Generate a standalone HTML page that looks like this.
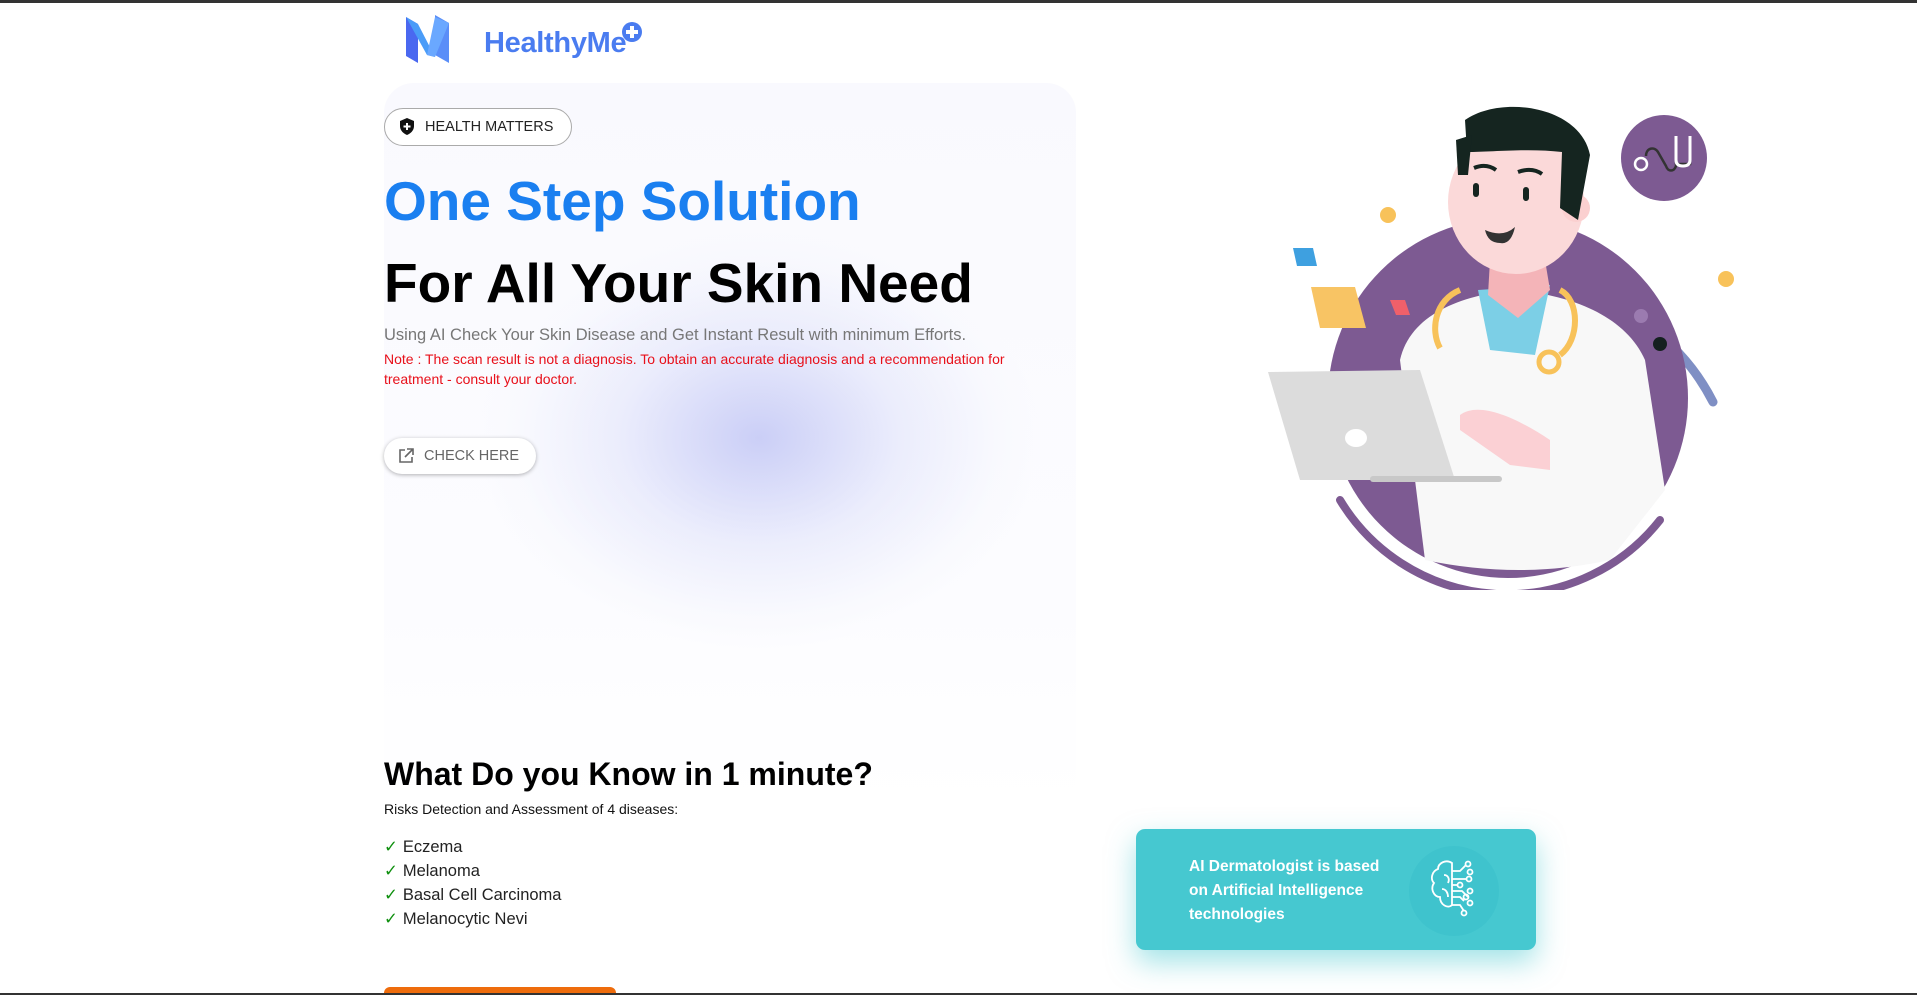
<!DOCTYPE html>
<html><head><meta charset="utf-8"><style>
*{margin:0;padding:0;box-sizing:border-box}
html,body{width:1917px;height:995px;overflow:hidden}
body{background:#fff;font-family:"Liberation Sans",Arial,sans-serif;position:relative}
.topbar{position:absolute;left:0;top:0;width:1917px;height:3px;background:#333}
.botbar{position:absolute;left:0;top:993px;width:1917px;height:2px;background:#333}
.panel{position:absolute;left:384px;top:83px;width:692px;height:723px;border-radius:30px;background:radial-gradient(ellipse 280px 210px at 375px 355px,rgba(200,204,246,.95),rgba(222,225,250,.55) 50%,rgba(246,247,253,.5) 85%,rgba(255,255,255,0) 100%),linear-gradient(#f9f9fe,#fcfcff 70%,#fff)}
.abs{position:absolute}
.logo-t{left:484px;top:27px;font-size:29px;font-weight:bold;color:#4a7cf0;letter-spacing:-0.3px}
.badge{left:384px;top:108px;width:188px;height:38px;border:1px solid #aaa;border-radius:19px;background:#fff;font-size:14.5px;color:#222;line-height:36px;padding-left:40px}
h1{position:absolute;left:384px;font-weight:bold;white-space:nowrap}
.h1a{top:169px;font-size:55px;color:#1a7ff0}
.h1b{top:251px;font-size:55px;color:#000}
.sub{left:384px;top:326px;font-size:16.5px;color:#777}
.note{left:384px;top:349px;font-size:14px;color:#e8101a;line-height:20px;width:660px}
.btn{left:384px;top:438px;width:152px;height:36px;border-radius:18px;background:#fff;box-shadow:0 1px 4px rgba(0,0,0,.3);font-size:14.5px;color:#666;line-height:36px;padding-left:40px}
.h2{left:384px;top:756px;font-size:32px;font-weight:bold;color:#000}
.risk{left:384px;top:801px;font-size:14px;color:#111}
.list{left:384px;top:835px;font-size:16.5px;color:#222;line-height:24px}
.list span{color:#109010;margin-right:5px}
.orange{left:384px;top:987px;width:232px;height:6px;border-radius:10px 10px 0 0;background:#ee6c0c}
.card{left:1136px;top:829px;width:400px;height:121px;border-radius:9px;background:#46c8d0;box-shadow:0 12px 28px rgba(70,200,208,.5)}
.card p{position:absolute;left:53px;top:26px;color:#fff;font-weight:bold;font-size:15.5px;line-height:24px}
</style></head><body>
<div class="topbar"></div>
<div class="panel"></div>
<svg class="abs" style="left:405px;top:15px" width="60" height="50" viewBox="0 0 60 50">
<polygon points="1,2 13,9 13,48 1,41" fill="#4a68f0"/>
<polygon points="1,2 13,9 30,42 22,40" fill="#4a9cf8"/>
<polygon points="30,0 44,8 44,48 30,40" fill="#5a8ef8"/>
<polygon points="22,40 30,42 44,8 30,2" fill="#6aa8ff"/>
</svg>
<div class="abs logo-t">HealthyMe</div>
<svg class="abs" style="left:620px;top:20px" width="24" height="24" viewBox="0 0 24 24"><circle cx="12" cy="12" r="10" fill="#4a7cf0"/><path d="M12 6v12M6 12h12" stroke="#fff" stroke-width="4"/></svg>
<div class="abs badge">HEALTH MATTERS</div>
<svg class="abs" style="left:400px;top:118px" width="14" height="17" viewBox="0 0 14 17"><path d="M7 0L0 3v5c0 4 3 7.5 7 9 4-1.5 7-5 7-9V3z" fill="#111"/><path d="M7 5v7M3.5 8.5h7" stroke="#fff" stroke-width="2"/></svg>
<h1 class="h1a">One Step Solution</h1>
<h1 class="h1b">For All Your Skin Need</h1>
<div class="abs sub">Using AI Check Your Skin Disease and Get Instant Result with minimum Efforts.</div>
<div class="abs note">Note : The scan result is not a diagnosis. To obtain an accurate diagnosis and a recommendation for treatment - consult your doctor.</div>
<div class="abs btn">CHECK HERE</div>
<svg class="abs" style="left:398px;top:448px" width="16" height="16" viewBox="0 0 16 16" fill="none" stroke="#666" stroke-width="1.6"><path d="M7 2H2v12h12V9M9 1h6v6M15 1L7 9"/></svg>
<div class="abs h2">What Do you Know in 1 minute?</div>
<div class="abs risk">Risks Detection and Assessment of 4 diseases:</div>
<div class="abs list"><div><span>✓</span>Eczema</div><div><span>✓</span>Melanoma</div><div><span>✓</span>Basal Cell Carcinoma</div><div><span>✓</span>Melanocytic Nevi</div></div>
<div class="abs orange"></div>
<div class="abs card"><p>AI Dermatologist is based<br>on Artificial Intelligence<br>technologies</p>
<svg style="position:absolute;left:272px;top:16px" width="92" height="92" viewBox="0 0 92 92"><circle cx="46" cy="46" r="45" fill="#3fc3cd"/>
<g fill="none" stroke="#fff" stroke-width="1.8"><path d="M44 18c-6-4-14 0-14 6-6 2-8 10-4 14-4 6 0 14 6 14 0 8 8 12 12 8z"/><path d="M36 30c4 0 6 4 4 8M34 44c4 0 6 4 6 8"/><path d="M44 26h8l6-6M44 34h14M44 40h6M44 46h10l6 6M44 52h8l4 4M44 60h8l4 6"/><circle cx="60" cy="19" r="2.5"/><circle cx="62" cy="27" r="2.5"/><circle cx="61" cy="34" r="2.5"/><circle cx="52" cy="40" r="2.5"/><circle cx="62" cy="46" r="2.5"/><circle cx="58" cy="52" r="2.5"/><circle cx="62" cy="58" r="2.5"/><circle cx="56" cy="68" r="2.5"/></g></svg>
</div>
<svg class="abs" style="left:1260px;top:90px" width="490" height="500" viewBox="0 0 490 500">
<path d="M95 280 A212 212 0 0 1 453 312" fill="none" stroke="#7f8fc4" stroke-width="9" stroke-linecap="round"/>
<circle cx="248" cy="308" r="180" fill="#7d5a92"/>
<path d="M80 410 A195 195 0 0 0 400 430" fill="none" stroke="#7d5a92" stroke-width="8" stroke-linecap="round"/>
<circle cx="404" cy="68" r="43" fill="#7d5a92"/>
<path d="M386 66c0-8 8-10 12-4l8 14c2 6 8 6 10 0V48M430 48v26h-14" fill="none" stroke="#333" stroke-width="2.5"/>
<path d="M416 46v24q0 6 7 6q7 0 7-6V46" fill="none" stroke="#fff" stroke-width="3"/>
<circle cx="381" cy="74" r="6" fill="none" stroke="#fff" stroke-width="2.5"/>
<circle cx="128" cy="125" r="8" fill="#f8c25a"/><circle cx="466" cy="189" r="8" fill="#f8c25a"/>
<circle cx="400" cy="254" r="7" fill="#152020"/><circle cx="381" cy="226" r="7" fill="#9b7bb0"/>
<polygon points="33,158 53,158 57,176 37,176" fill="#3ea0e0"/>
<polygon points="51,197 95,197 106,238 60,238" fill="#f8c464"/>
<polygon points="130,210 145,210 150,225 136,225" fill="#f0606a"/>
<path d="M165 470 L140 270 C150 225 200 205 255 200 C310 205 365 225 385 270 L405 400 L350 470 Q260 490 165 470z" fill="#f8f8f8"/>
<polygon points="218,200 290,195 275,265 230,260" fill="#7ccfe6"/>
<path d="M228 205 L258 228 L290 200 L285 170 L230 170z" fill="#f4b4b8"/>
<ellipse cx="256" cy="112" rx="68" ry="72" fill="#fbd9d9"/>
<circle cx="316" cy="118" r="14" fill="#fbd0d0"/>
<path d="M205 30 C240 5 320 15 330 65 L318 130 L300 118 L302 62 C270 58 230 62 207 62z" fill="#152520"/>
<path d="M196 50 L212 45 L208 85 L198 85z" fill="#152520"/>
<path d="M214 78q12-5 22 2M258 82q14-5 24 2" stroke="#152520" stroke-width="4" fill="none"/>
<rect x="213" y="93" width="6" height="14" rx="3" fill="#152520"/><rect x="263" y="97" width="6" height="14" rx="3" fill="#152520"/>
<path d="M225 140q18 8 30-3q-4 18-15 16q-12 0-15-13z" fill="#333"/>
<path d="M200 200 C175 210 170 240 180 258 M300 200 C320 210 320 250 300 265" fill="none" stroke="#f8c25a" stroke-width="6"/>
<circle cx="289" cy="272" r="10" fill="none" stroke="#f8c25a" stroke-width="5"/>
<polygon points="8,282 160,280 195,390 40,390" fill="#dcdcdc"/>
<rect x="110" y="386" width="132" height="6" rx="3" fill="#c8c8c8"/>
<ellipse cx="96" cy="348" rx="11" ry="9" fill="#fff"/>
<path d="M200 325 C220 310 260 330 290 350 L290 380 L250 375 L200 340z" fill="#fbd0d4"/>
</svg>
<div class="botbar"></div>
</body></html>
